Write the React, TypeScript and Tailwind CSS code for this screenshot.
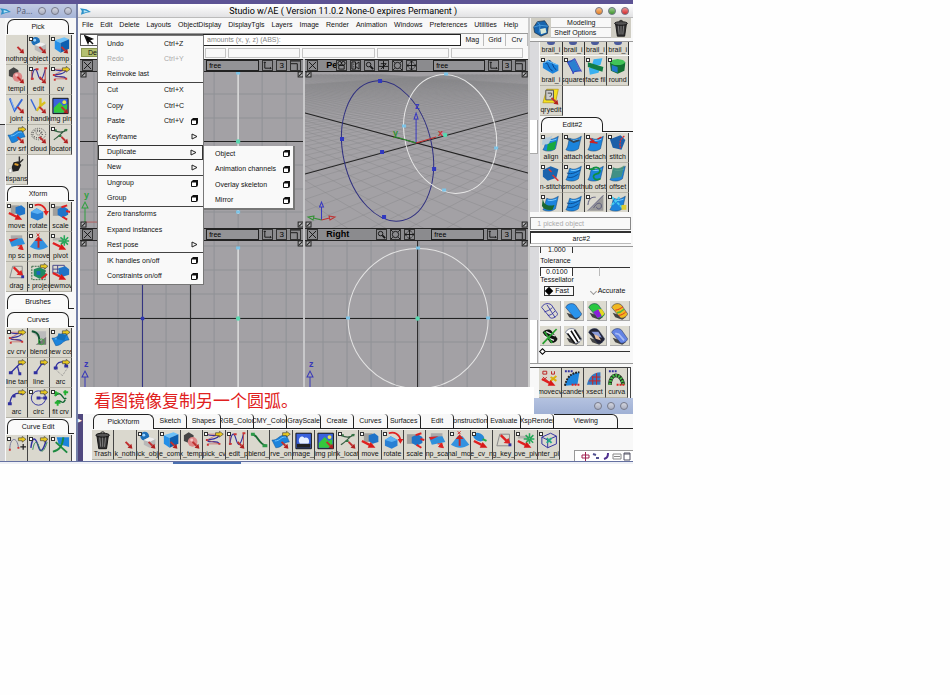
import type { ReactNode } from "react";
import clsx from "clsx";

type Tool = { icon: string; label: string; option?: boolean };

const BLUE = "#1c84dc";
const NAVY = "#3030a0";

const redArrow = (
  <g>
    <path d="M12 12l4 4" stroke="#c03030" strokeWidth="2" />
    <path d="M19 19l-5-1 4-4z" fill="#b02020" stroke="none" />
  </g>
);

const bigRedArrow = (
  <g>
    <path d="M3 11l8 4" stroke="#e02020" strokeWidth="2.5" />
    <path d="M17 18l-8 0 3-6z" fill="#d81818" stroke="none" />
  </g>
);

const yellowArrow = <path d="M13 2.500h4V1l4 3-4 3V5.500h-4z" fill="#e8c820" stroke="#333" strokeWidth=".6" />;

const greenStar = (
  <path
    d="M15 3v12M9 9h12M11 5l8 8M19 5l-8 8"
    stroke="#27a85a"
    strokeWidth="1.600"
    strokeDasharray="5 1"
  />
);

const cube = (
  <g>
    <path d="M5 5l10-3 5 2-9 4z" fill="#6cc0f8" />
    <path d="M5 5l6 3v10l-6-4z" fill="#2490e8" />
    <path d="M11 8l9-4v10l-9 4z" fill="#0d5fb0" />
  </g>
);

const patch = (
  <g>
    <path d="M2 10c6 1 7-6 15-5l3 7c-7 0-7 6-14 6z" fill={BLUE} stroke="#0c4f90" strokeWidth=".5" />
    <path d="M5 11c6 0 6-5 12-4" stroke="#70c4ff" fill="none" />
  </g>
);

const surface = (
  <g>
    <path d="M7 5c4 2 7 1 12-2l-3 13c-4 3-9 3-13 1 3-4 2-8 4-12z" fill={BLUE} stroke="#0c3c70" strokeWidth=".5" />
    <path d="M8 7c3 1 6 0 9-1" stroke="#80ccff" fill="none" />
  </g>
);

const dome = (fill: string) => (
  <g>
    <path d="M3 12l3 5 8 3 4-3z" fill="#444" />
    <path d="M2 6c1-4 7-6 11-3l7 10c0 3-5 6-8 5z" fill={fill} stroke="#1b2a55" strokeWidth=".6" />
  </g>
);

const trash = (
  <g>
    <path d="M5 5h12l-2 14H7z" fill="#333" stroke="#111" />
    <path d="M8 7l1 10M11 7v10M14 7l-1 10" stroke="#999" strokeWidth=".8" />
    <ellipse cx="11" cy="5" rx="7" ry="2" fill="#555" stroke="#111" />
    <path d="M9 3c0-2 4-2 4 0" fill="none" stroke="#222" />
  </g>
);

const icons: Record<string, ReactNode> = {
  nothing: redArrow,
  trash,
  object: (
    <g>
      <circle cx="8" cy="6" r="4.500" fill="#1d6fb8" />
      <circle cx="7" cy="5" r="1.500" fill="#9cd4ff" />
      <path d="M7 10l6-3 6 2v6l-6 3-6-3z" fill="#b8b8b8" />
      <path d="M7 10l6-3 6 2-6 3z" fill="#eee" />
      {redArrow}
    </g>
  ),
  comp: <g>{cube}{redArrow}</g>,
  templ: (
    <g>
      <path d="M3 5l5-3 5 3v6l-5 2-5-2z" fill="#444" />
      <circle cx="12" cy="12" r="5" fill="#d88" />
      <circle cx="11" cy="10" r="1.500" fill="#f4c4c4" />
      {redArrow}
    </g>
  ),
  edit: (
    <g fill="none">
      <path d="M4 15C5 3 8 1 10 8s4 12 8-4" stroke={NAVY} strokeWidth="1.200" />
      <path d="M4 15V5M18 4v11" stroke="#b44" />
      <path d="M3 14h3M8 4h3M17 3h3" stroke="#c33" strokeWidth="2" />
      {redArrow}
    </g>
  ),
  cv: (
    <g fill="none">
      <path d="M4 4c8 4 14-2 12 2S3 9 5 11s10-1 12 3" stroke={NAVY} strokeWidth="1.200" />
      <path d="M4 4h12L4 10l13 4H5" stroke="#b44" strokeWidth=".6" />
      <path d="M3 4h2M15 5h2M3 10h2M4 15h2M16 14h2" stroke="#c33" strokeWidth="2" />
      {yellowArrow}
    </g>
  ),
  joint: (
    <g fill="none">
      <path d="M4 3l5 13L17 4" stroke="#3868d8" strokeWidth="2" />
      <path d="M5 4l4 11" stroke="#9cf" strokeWidth=".8" />
      {redArrow}
    </g>
  ),
  handle: (
    <g fill="none">
      <path d="M3 4l6 12" stroke="#3868d8" strokeWidth="1.500" />
      <path d="M9 16l4-5V3M13 11l5-4" stroke="#d8c020" strokeWidth="2.500" />
      {redArrow}
    </g>
  ),
  image: (
    <g>
      <path d="M3 3h16v16H3z" fill="#3b62dd" stroke="#111" />
      <path d="M4 13l6-6 4 4 4-2v9H4z" fill="#35c83c" />
      <circle cx="15" cy="7" r="2" fill="#e8e850" />
      {redArrow}
    </g>
  ),
  photo: (
    <g>
      <path d="M3 3h16v16H3z" fill="#3b62dd" stroke="#111" />
      <path d="M6 11c0-5 4-6 6-3 3-2 6 2 4 6H7z" fill="#e8f0ff" />
      <path d="M4 14h14v4H4z" fill="#222" />
    </g>
  ),
  crvsrf: <g>{patch}{yellowArrow}{redArrow}</g>,
  cloud: (
    <g fill="none" stroke="#555">
      <ellipse cx="11" cy="9" rx="7.500" ry="6" strokeDasharray="1 1" />
      <ellipse cx="10" cy="9" rx="5" ry="4" strokeDasharray="1 1.500" strokeWidth="1.500" />
      <ellipse cx="11" cy="8" rx="2.500" ry="2" strokeDasharray="1 1" />
      {redArrow}
    </g>
  ),
  locator: (
    <g fill="none">
      <path d="M4 5c6 3 10 3 14-1M17 4c-4 3-8 8-13 11" stroke="#365c42" strokeWidth="1.200" />
      <path d="M4 5h3M9 11h3M15 5h3" stroke="#374" strokeWidth="2" />
      {redArrow}
    </g>
  ),
  blendc: <g fill="none"><path d="M4 4c7 1 6 10 15 12" stroke="#1c6a34" strokeWidth="2" /><path d="M3 4h4M15 16h5" stroke="#2c9a48" strokeWidth="3" /></g>,
  plug: (
    <g>
      <path d="M14 1v7M18 4l-5 5" stroke="#333" strokeWidth="1.500" />
      <path d="M8 7l5-1 3 4-3 6-6 1-1-5z" fill="#222" />
      <path d="M9 9l4 1" stroke="#e0a030" strokeWidth="2" />
      <path d="M3 14h3v4H3z" fill="#fff" stroke="#999" strokeWidth=".5" />
    </g>
  ),
  move: (
    <g>
      <path d="M5 3h9v9H5z" fill="#888" opacity=".7" />
      <path d="M10 5l6-2 4 3v6l-6 2-4-3z" fill="#2074c8" />
      {bigRedArrow}
    </g>
  ),
  rotate: (
    <g>
      <path d="M3 10l6-4 7 4v6l-6 3-7-3z" fill="#2880d4" />
      <path d="M3 10l6-4 7 4-6 2z" fill="#5ab0f4" />
      <path d="M7 3c6-2 11 1 12 7" fill="none" stroke="#e02020" strokeWidth="1.800" />
      <path d="M16 9h6l-3 5z" fill="#e02020" />
    </g>
  ),
  scale: (
    <g>
      <path d="M3 4h9v10H3z" fill="#888" opacity=".7" />
      <path d="M8 7l6-3 5 3v6l-6 3-5-3z" fill="#2074c8" />
      <path d="M12 5l6-2M13 15l5 3M17 9l4 1" stroke="#e02020" strokeWidth="2" />
    </g>
  ),
  npscale: (
    <g>
      <path d="M5 3h12v5H5z" fill="#aaa" />
      <path d="M3 7l14-1 3 6-14 3z" fill="#2e90dc" />
      <path d="M3 7l10-1-8 4z" fill="#d22" />
      <path d="M12 14h5M18 18l-5-1 3-4z" stroke="#d22" fill="#d22" />
    </g>
  ),
  propmove: (
    <g>
      <path d="M2 15l7-9h5l7 9c-7 4-12 4-19 0z" fill="#3492e0" />
      <path d="M11 16V8" stroke="#c22" strokeWidth="2" />
      <path d="M7 9l4-5 4 5z" fill="#c22" />
      <path d="M9 1l3 3M12 1L9 4" stroke="#c22" />
    </g>
  ),
  pivot: (
    <g>
      <path d="M3 7h10v5" stroke="#999" strokeWidth="3" fill="none" opacity=".6" />
      {greenStar}
      {bigRedArrow}
    </g>
  ),
  drag: (
    <g fill="none">
      <path d="M4 16L7 4h10v12z" stroke="#888" />
      <path d="M8 5l6 6" stroke="#d22" strokeWidth="2.500" />
      <path d="M18 14l-7-1 5-5z" fill="#d22" />
      <path d="M16 15h3" stroke={NAVY} strokeWidth="3" />
    </g>
  ),
  project: (
    <g>
      <path d="M4 4h14v14H4z" fill="none" stroke="#364" strokeDasharray="2 1" />
      <path d="M6 7l6-2 6 3v7l-6 2-6-3z" fill="#1f8c62" />
      <path d="M9 9h4v4H9z" fill="#1d66c0" />
      {yellowArrow}
      <path d="M14 17l6-5" stroke="#d22" strokeWidth="2" />
    </g>
  ),
  viewmove: (
    <g>
      <path d="M3 3h12v8H3zM3 7h12M8 3v8" fill="none" stroke="#448" />
      <path d="M9 6l7-2 4 3v6l-7 2-4-3z" fill="#2074c8" />
      {bigRedArrow}
    </g>
  ),
  blend: (
    <g fill="none">
      <path d="M3 3h16v14z" fill="#bbb" />
      <path d="M3 17h16V9L8 17z" fill="#777" />
      <path d="M4 3c7 1 8 5 8 13" stroke="#153" strokeWidth="2" />
      <circle cx="14" cy="14" r="3" stroke="#4a4" />
    </g>
  ),
  newcos: <g>{patch}<path d="M9 5l8 2-2 6-8-2z" fill="#1670b8" />{yellowArrow}</g>,
  linetan: (
    <g fill="none" stroke={NAVY}>
      <path d="M5 15L16 4M12 8l2 8" strokeWidth="1.300" />
      <path d="M3 15h4M14 5h3M13 16h3" strokeWidth="3" />
      {yellowArrow}
    </g>
  ),
  line: (
    <g fill="none" stroke={NAVY}>
      <path d="M8 15l7-10" strokeWidth="1.300" />
      <path d="M6 15h4M13 5h4" strokeWidth="3" />
      {yellowArrow}
    </g>
  ),
  arc: (
    <g fill="none" stroke={NAVY}>
      <path d="M4 16C5 8 8 4 17 5" strokeWidth="1.300" />
      <path d="M2 16h4M7 8h3M15 5h4" strokeWidth="3" />
      {yellowArrow}
    </g>
  ),
  arcTan: (
    <g fill="none" stroke={NAVY}>
      <path d="M6 10C7 2 15 2 17 8" strokeWidth="1.300" />
      <path d="M4 10l9 8 6-9" stroke="#888" strokeDasharray="1 1" />
      <path d="M4 10h4M15 8h4" strokeWidth="3" />
      {yellowArrow}
    </g>
  ),
  circ: (
    <g fill="none" stroke={NAVY}>
      <circle cx="11" cy="10" r="7.500" />
      <path d="M11 10h7" />
      <path d="M9 10h4M16 10h4" strokeWidth="3" />
      {yellowArrow}
    </g>
  ),
  fit: (
    <g fill="none">
      <path d="M5 8c8-8 8 6 12 2M6 15c6-6 6 4 10-3" stroke="#163" strokeWidth="1.500" />
      <path d="M4 5h5M6 3v5M5 15h6M8 12v6M14 4h5M16 2v5" stroke="#22b030" strokeWidth="2" />
    </g>
  ),
  curveAdd: (
    <g fill="none">
      <path d="M4 15c0-14 8-14 9-2" stroke="#779" />
      <path d="M15 12h6M18 9v6" stroke="#222" strokeWidth="1.300" />
      <path d="M3 15h2M12 13h2" stroke="#c33" strokeWidth="2" />
      {yellowArrow}
    </g>
  ),
  curveWave: (
    <g fill="none">
      <path d="M3 13c2-16 6-8 8-1s5 4 8-7" stroke={NAVY} strokeWidth="1.500" />
      <path d="M5 15c2-12 5-8 7-2s5 4 8-6" stroke="#385" />
      {yellowArrow}
    </g>
  ),
  curveSurf: (
    <g>
      <path d="M7 2h13v10L9 9z" fill={BLUE} />
      <path d="M3 17c6-1 10-5 11-15M6 7l12 11" stroke="#1c8a40" strokeWidth="2" fill="none" />
    </g>
  ),
  wireBox: (
    <g fill="none" stroke={NAVY}>
      <path d="M4 7l9-4 6 3v8l-9 4-6-4zM4 7l6 3 9-4M10 10v8" />
      <path d="M9 8l5 5M14 8l-5 5" stroke="#2a8" strokeWidth="2" />
    </g>
  ),
  pickpoint: (
    <g>
      <ellipse cx="8" cy="7" rx="6" ry="4" fill="#2688d8" transform="rotate(25 8 7)" />
      <path d="M12 9l4 2" stroke="#2a4" strokeWidth="2" />
      {bigRedArrow}
    </g>
  ),
  rail: (
    <g>
      <path d="M3 7l5-3 11 5v6l-6 3L3 12z" fill={BLUE} />
      <path d="M5 7c4-2 3 6 8 8M9 4c5 1 3 7 8 10" stroke="#083c86" fill="none" />
      <path d="M4 7l4-2 10 4" stroke="#6cc4ff" fill="none" />
    </g>
  ),
  square: (
    <g>
      <path d="M4 5l8-2 6 12-8 2z" fill="#2a80d0" />
      <path d="M3 5c5 3 7-3 9-2M10 18c2-5 8-1 9-4M3 3l8 15M12 2l7 14" stroke="#3838b8" fill="none" />
    </g>
  ),
  filSurf: (
    <g>
      <path d="M9 3l9-1-2 7-9 1zM4 12l12-1-2 6-9 2z" fill="#38b0f0" />
      <path d="M3 6l16 5-1 5L3 11z" fill="#127c44" />
    </g>
  ),
  round: (
    <g>
      <path d="M3 6l8-3 8 3-1 9-7 3-7-3z" fill="#136f33" />
      <ellipse cx="11" cy="6" rx="7.500" ry="3" fill="#42c458" />
      <path d="M5 9l6 2v6l-6-2z" fill="#2277cc" />
    </g>
  ),
  query: (
    <g>
      <path d="M7 3h12l-3 14H3z" fill="#f4e020" stroke="#a80" strokeWidth=".6" />
      <path d="M6 4h8v10H6z" fill="#ccc" stroke="#555" />
      <path d="M8 7h4v2l-2 2" stroke="#444" fill="none" />
      {redArrow}
    </g>
  ),
  align: (
    <g>
      {surface}
      <path d="M3 4c4 1 7 0 10-2l-4 9-7 1z" fill="#b4ccdc" />
      <path d="M8 11l9-3-2 9-8 1z" fill="#18a840" />
    </g>
  ),
  attach: <g>{surface}<path d="M2 4l9 5 6-2" stroke="#345" strokeWidth="2" fill="none" /></g>,
  detach: <g>{surface}<path d="M3 4l6 4-4 1 8 1M13 6l4-2" stroke="#c22" strokeWidth="1.500" fill="none" /></g>,
  stitch: (
    <g>
      <path d="M3 6l11-4 5 5-4 10-9-2z" fill="#1c5fa8" />
      <path d="M18 3c-5 3-5 8-4 13" stroke="#d33" strokeDasharray="2 1" strokeWidth="1.500" fill="none" />
    </g>
  ),
  unstitch: (
    <g>
      <path d="M3 7l8-4 8 3-2 9-9 3-5-4z" fill="#1c64ac" />
      <path d="M13 12l6 6M9 6l3 3" stroke="#d33" strokeWidth="1.500" />
    </g>
  ),
  smooth: <g>{surface}<path d="M4 10c5 2 10-1 14-3M4 14c5 2 9-1 12-3" stroke="#0a4a90" fill="none" /></g>,
  subofst: <g>{surface}<path d="M8 5c8-3 10 5 4 6s-3 8 4 5M4 6h6" stroke="#109040" strokeWidth="1.800" fill="none" /></g>,
  offset: <g>{surface}<path d="M6 4c4 2 8 1 12-2l-3 12-11 2z" fill="#4a9470" opacity=".8" /></g>,
  flange: <g>{surface}<path d="M3 4c0 7 4 10 12 8l-2 5c-6 1-9-1-11-4z" fill="#186830" /></g>,
  curves2: (
    <g>
      <path d="M19 2v16H4z" fill="#999" />
      <path d="M3 12C4 4 8 4 11 4M9 15c3-6 8-6 8-2s-5 4-5 1M3 18L19 2" stroke="#557" fill="none" />
    </g>
  ),
  texture: (
    <g>
      {surface}
      <path d="M5 4l12 12M13 4l-9 9" stroke="#4ce" strokeWidth="2" strokeDasharray="3 1" />
      <path d="M15 12h5v5h-5z" fill="#dc3" />
    </g>
  ),
  movecv: (
    <g>
      <path d="M4 3h4v3H4zM13 3v3h3V3M4 9l5 4M8 9l-4 4" fill="none" stroke="#b22" />
      <path d="M12 9l6 4M18 8l-6 5" stroke="#d8b010" strokeWidth="2" />
      {bigRedArrow}
    </g>
  ),
  scandev: (
    <g>
      <path d="M3 18C5 9 9 5 18 4l-2 13z" fill={BLUE} />
      <path d="M3 18C5 9 9 5 18 4" stroke="#222" strokeWidth="2" fill="none" strokeDasharray="2 1" />
      <path d="M3 3h9" stroke={NAVY} strokeWidth="2" strokeDasharray="2 1" />
      <path d="M10 17h9" stroke="#d22" strokeWidth="2" strokeDasharray="2 1" />
    </g>
  ),
  xsect: (
    <g>
      <path d="M3 17C5 9 9 4 17 4v13z" fill="#3578c0" />
      <path d="M5 13h12M8 9h9M9 8v9M13 5v12" stroke="#c22" />
    </g>
  ),
  curva: (
    <g fill="none">
      <path d="M4 17C5 4 15 4 18 17" stroke="#222" strokeWidth="4" />
      <path d="M4 17C5 4 15 4 18 17" stroke="#4b4" strokeWidth="3" strokeDasharray="2 1" />
      <path d="M3 3h9" stroke={NAVY} strokeWidth="2" strokeDasharray="2 1" />
      <path d="M11 17h9" stroke="#d22" strokeWidth="2" strokeDasharray="2 1" />
    </g>
  ),
  domeWire: (
    <g fill="none" stroke={NAVY}>
      <path d="M2 6c1-4 7-6 11-3l7 10c0 3-5 6-8 5zM8 3l9 14M5 11c3-1 7-2 9-5M9 15c3 0 6-2 8-5" />
    </g>
  ),
  domeBlue: dome("#2a94ec"),
  domeMulti: (
    <g>
      {dome("#28c840")}
      <path d="M7 11l6-3 4 8-5 2z" fill="#8a20d8" />
      <path d="M13 8l4 0 3 5-3 3z" fill="#e8d820" />
    </g>
  ),
  domeGold: (
    <g>
      {dome("#f0b820")}
      <path d="M6 9c3 0 6-2 9-4M10 15c3 0 6-2 8-4" stroke="#d22" fill="none" />
      <path d="M8 12c3 0 6-2 8-4" stroke="#4b4" strokeWidth="1.500" fill="none" />
    </g>
  ),
  domeNone: (
    <g>
      <path d="M3 6c3-4 8-4 10-2l7 9c-1 4-5 5-8 5z" fill="#111" />
      <path d="M4 10l12 5M7 5l10 5" stroke="#eee" strokeWidth="1.500" />
      <path d="M3 19L19 2M5 5l9 13" stroke="#28a030" strokeWidth="2" />
    </g>
  ),
  domeZebra: (
    <g>
      {dome("#fff")}
      <path d="M4 7l8 11M8 4l8 13M12 3l7 11" stroke="#111" strokeWidth="1.800" />
    </g>
  ),
  domeEnv: <g>{dome("#223")}<path d="M5 5l8 0 4 7-7-2z" fill="#8898d8" /><path d="M8 8l5 2 3 5-6-2z" fill="#e8c0a0" /></g>,
  domeSoft: <g>{dome("#6484e4")}<path d="M6 7l4 1 6 7" stroke="#a8bcf4" fill="none" strokeWidth="2" /></g>,
  gem: (
    <g>
      <path d="M3 9l4-6 8-1 4 6-1 8-7 3-7-4z" fill="#1764ae" stroke="#123" strokeWidth=".7" />
      <path d="M3 9l7-2 9 1M10 7L7 3M10 7l-1 8" stroke="#4a9cdc" fill="none" />
      <path d="M10 11l6-1 1 5-6 2z" fill="#d8e8d8" />
    </g>
  ),
};

const pickTools: Tool[] = [
  { icon: "nothing", label: "nothng" },
  { icon: "object", label: "object", option: true },
  { icon: "comp", label: "comp", option: true },
  { icon: "templ", label: "templ" },
  { icon: "edit", label: "edit", option: true },
  { icon: "cv", label: "cv", option: true },
  { icon: "joint", label: "joint" },
  { icon: "handle", label: "k handle" },
  { icon: "image", label: "img pln" },
  { icon: "crvsrf", label: "crv srf" },
  { icon: "cloud", label: "cloud" },
  { icon: "locator", label: "locator", option: true },
  { icon: "plug", label: "tispans" },
];

const xformTools: Tool[] = [
  { icon: "move", label: "move", option: true },
  { icon: "rotate", label: "rotate", option: true },
  { icon: "scale", label: "scale", option: true },
  { icon: "npscale", label: "np sc" },
  { icon: "propmove", label: "p move", option: true },
  { icon: "pivot", label: "pivot", option: true },
  { icon: "drag", label: "drag" },
  { icon: "project", label: "e projec" },
  { icon: "viewmove", label: "iewmov" },
];

const curveTools: Tool[] = [
  { icon: "cv", label: "cv crv", option: true },
  { icon: "blend", label: "blend" },
  { icon: "newcos", label: "new cos", option: true },
  { icon: "linetan", label: "line tan" },
  { icon: "line", label: "line" },
  { icon: "arcTan", label: "arc" },
  { icon: "arc", label: "arc" },
  { icon: "circ", label: "circ", option: true },
  { icon: "fit", label: "fit crv", option: true },
];

const curveEditTools: Tool[] = [
  { icon: "curveAdd", label: "", option: true },
  { icon: "curveWave", label: "", option: true },
  { icon: "curveSurf", label: "", option: true },
];

const surfaceTools: Tool[] = [
  { icon: "rail", label: "brail_i", option: true },
  { icon: "square", label: "squarer", option: true },
  { icon: "filSurf", label: "face fil", option: true },
  { icon: "round", label: "round", option: true },
  { icon: "query", label: "qryedit" },
];

const editTools: Tool[] = [
  { icon: "align", label: "align", option: true },
  { icon: "attach", label: "attach", option: true },
  { icon: "detach", label: "detach", option: true },
  { icon: "stitch", label: "stitch", option: true },
  { icon: "unstitch", label: "n-stitch", option: true },
  { icon: "smooth", label: "smooth", option: true },
  { icon: "subofst", label: "ub ofst", option: true },
  { icon: "offset", label: "offset", option: true },
  { icon: "flange", label: "", option: true },
  { icon: "smooth", label: "" },
  { icon: "curves2", label: "", option: true },
  { icon: "texture", label: "", option: true },
];

const evalTools: Tool[] = [
  { icon: "movecv", label: "movecv" },
  { icon: "scandev", label: "scandev" },
  { icon: "xsect", label: "xsect" },
  { icon: "curva", label: "curva" },
];

const shelfTools: Tool[] = [
  { icon: "trash", label: "Trash" },
  { icon: "nothing", label: "k_noth" },
  { icon: "object", label: "ick_obj", option: true },
  { icon: "comp", label: "e_com", option: true },
  { icon: "templ", label: "x_templ" },
  { icon: "cv", label: "pick_cv", option: true },
  { icon: "edit", label: "_edit_p", option: true },
  { icon: "blendc", label: "blend_" },
  { icon: "crvsrf", label: "rve_on" },
  { icon: "photo", label: "image_j" },
  { icon: "image", label: "img pln" },
  { icon: "locator", label: "k_locat", option: true },
  { icon: "move", label: "move", option: true },
  { icon: "rotate", label: "rotate", option: true },
  { icon: "scale", label: "scale" },
  { icon: "npscale", label: "np_sca" },
  { icon: "propmove", label: "nal_mo", option: true },
  { icon: "pickpoint", label: "e_cv_n", option: true },
  { icon: "drag", label: "g_key_" },
  { icon: "pivot", label: "ove_piv", option: true },
  { icon: "wireBox", label: "nter_pi", option: true },
];

const menus = [
  "File", "Edit", "Delete", "Layouts", "ObjectDisplay", "DisplayTgls", "Layers",
  "Image", "Render", "Animation", "Windows", "Preferences", "Utilities", "Help",
];

const shelfTabs = [
  "Sketch", "Shapes", "RGB_Colou", "CMY_Colou", "GrayScale", "Create", "Curves",
  "Surfaces", "Edit", "onstruction", "Evaluate", "XspRender",
];

type MenuItem = { label: string; keys?: string; end?: "box" | "sub"; line?: boolean; disabled?: boolean; open?: boolean };

const editMenu: MenuItem[] = [
  { label: "Undo", keys: "Ctrl+Z" },
  { label: "Redo", keys: "Ctrl+Y", disabled: true },
  { label: "Reinvoke last", line: true },
  { label: "Cut", keys: "Ctrl+X" },
  { label: "Copy", keys: "Ctrl+C" },
  { label: "Paste", keys: "Ctrl+V", end: "box" },
  { label: "Keyframe", end: "sub" },
  { label: "Duplicate", end: "sub", open: true },
  { label: "New", end: "sub", line: true },
  { label: "Ungroup", end: "box" },
  { label: "Group", end: "box", line: true },
  { label: "Zero transforms" },
  { label: "Expand instances" },
  { label: "Rest pose", end: "sub", line: true },
  { label: "IK handles on/off", end: "box" },
  { label: "Constraints on/off", end: "box" },
];

function ToolIcon({ name }: { name: string }) {
  return (
    <svg viewBox="0 0 22 20" className="h-[20px] w-full" aria-hidden="true">
      {icons[name]}
    </svg>
  );
}

function ToolButton({ tool }: { tool: Tool }) {
  return (
    <button
      type="button"
      className="relative flex h-[30px] min-w-0 flex-col items-center overflow-hidden border-r border-b border-r-[#444] border-b-[#b5b3a8] bg-[#dad8ce]"
    >
      {tool.option && <span className="absolute top-[2px] left-[1px] size-[4px] border border-[#333] bg-white" />}
      <ToolIcon name={tool.icon} />
      <span className="flex h-[9px] w-full justify-center text-[7px] leading-[8px] whitespace-nowrap">{tool.label}</span>
    </button>
  );
}

function FolderTab({ title }: { title: string }) {
  return (
    <div className="flex h-[15px] items-end">
      <span className="w-px" />
      <button type="button" className="h-[15px] w-[62px] rounded-t-[7px] border-x border-t border-[#222] bg-[#fafafa] text-[7px]">
        {title}
      </button>
      <span className="flex-1 border-b border-[#222]" />
    </div>
  );
}

function WindowDots({ colors }: { colors: "gray" | "traffic" }) {
  const fills = colors === "gray" ? ["bg-[#a9aec0]", "bg-[#a9aec0]", "bg-[#a9aec0]"] : ["bg-[#e88020]", "bg-[#3f9828]", "bg-[#d82828]"];
  return (
    <div className="flex gap-[5px]">
      {fills.map((fill, i) => (
        <button
          key={i}
          type="button"
          aria-label={["Minimize", "Maximize", "Close"][i]}
          className={clsx("size-[8px] rounded-full border border-[#777b8c] bg-linear-to-b from-white/50 to-transparent", fill)}
        />
      ))}
    </div>
  );
}

function AppLogo() {
  return (
    <svg viewBox="0 0 12 8" className="h-[8px] w-[11px]" aria-hidden="true">
      <path d="M0 1l7 1 5 3-5 1-6 2 1-4z" fill="#2c90c8" />
      <path d="M4 3l5 1.500L4 6z" fill="#b5e4f8" />
    </svg>
  );
}

function Palette() {
  return (
    <aside className="flex h-[457px] w-[76px] shrink-0 flex-col overflow-hidden bg-[#f8f8f8]">
      <div className="flex h-[14px] shrink-0 items-center justify-between bg-linear-to-b from-[#c2cbe2] to-[#a6b5d8] pr-[4px] text-[8px] text-[#555d75]">
        <AppLogo />
        <span className="font-['Noto_Sans']">Pa...</span>
        <WindowDots colors="gray" />
      </div>
      <div className="flex min-h-0 flex-1">
        <div className="w-[5px] shrink-0 bg-[#d4d4d6]">
          <div className="h-[107px] border-b border-[#333] bg-[#f2f2f2]" />
        </div>
        <div className="min-w-0 flex-1 pt-px pr-[2px] pl-px">
          <FolderTab title="Pick" />
          <div className="mt-px grid w-[66px] grid-cols-3">{pickTools.map((t) => <ToolButton key={t.label} tool={t} />)}</div>
          <div className="mt-px"><FolderTab title="Xform" /></div>
          <div className="mt-px grid w-[66px] grid-cols-3">{xformTools.map((t) => <ToolButton key={t.label} tool={t} />)}</div>
          <div className="mt-[2px]"><FolderTab title="Brushes" /></div>
          <div className="mt-[3px]"><FolderTab title="Curves" /></div>
          <div className="mt-px grid w-[66px] grid-cols-3">{curveTools.map((t, i) => <ToolButton key={i} tool={t} />)}</div>
          <div className="mt-px"><FolderTab title="Curve Edit" /></div>
          <div className="mt-px grid w-[66px] grid-cols-3">{curveEditTools.map((t) => <ToolButton key={t.icon} tool={t} />)}</div>
        </div>
      </div>
    </aside>
  );
}

const glyphs: Record<string, ReactNode> = {
  close: <path d="M1 1l8 8M9 1L1 9" />,
  axes: <path d="M2 1v7h7M1 2l1-1 1 1M8 7l1 1-1 1" />,
  corner: <path d="M0 3h7v7M0 0h10" />,
  camera: <g><circle cx="3" cy="2.500" r="2" /><circle cx="7" cy="2.500" r="2" /><path d="M2 5h6v4H2z" /></g>,
  film: <path d="M1 1v8h4V1zM5 4l4-3v8L5 6M3 3v1M3 6v1" />,
  zoom: <g><circle cx="4" cy="4" r="2.500" /><path d="M6 6l3 3" strokeWidth="2" /></g>,
  tumble: <path d="M5 0v9M0 6h10M2 3h6M2 9l6-6" />,
  look: <g><circle cx="5" cy="5" r="3.500" /><path d="M0 0l2 2M10 0L8 2M0 10l2-2M10 10L8 8" /></g>,
  pan: <path d="M5 0v10M0 5h10M3 2l2-2 2 2M3 8l2 2 2-2M2 3L0 5l2 2M8 3l2 2-2 2" />,
};

function Glyph({ name }: { name: string }) {
  return (
    <button type="button" aria-label={name} className="size-[11px] shrink-0 border border-[#333]">
      <svg viewBox="0 0 10 10" className="size-full" fill="none" stroke="#111" aria-hidden="true">
        {glyphs[name]}
      </svg>
    </button>
  );
}

function ViewHeader({ title, tools }: { title?: string; tools: string[] }) {
  return (
    <div className="flex h-[13px] items-center border-y border-[#222] bg-[#8b8b8e] px-[2px]">
      <Glyph name="close" />
      <strong className="ml-[8px] w-[10px] text-[9px] leading-[11px] whitespace-nowrap">{title}</strong>
      <span className="flex flex-1 justify-end gap-[3px]">{tools.map((t) => <Glyph key={t} name={t} />)}</span>
      <select aria-label="Constraint" className="mr-[3px] ml-[16px] h-[11px] w-[53px] appearance-none border border-[#222] bg-[#939396] px-[2px] text-[7px] leading-[8px]">
        <option>free</option>
      </select>
      <Glyph name="axes" />
      <button type="button" className="mx-[3px] h-[11px] w-[11px] border border-[#333] text-[8px] leading-[9px]">3</button>
      <Glyph name="corner" />
    </div>
  );
}

function Handle({ x, y }: { x: number; y: number }) {
  return (
    <g stroke="#222" fill="#b4b4b6">
      <rect x={x} y={y} width="5" height="5" />
      <path d={`M${x + 1} ${y + 4}l3-3`} />
    </g>
  );
}

const gridX = Array.from({ length: 20 }, (_, i) => 95 + i * 24);
const gridY = Array.from({ length: 14 }, (_, i) => 47 + i * 24);

// ground plane seen at 45 degrees, one segment per grid line
const floor = Array.from({ length: 101 }, (_, i) => (i - 50) * 0.6)
  .map((c) =>
    [1, -1]
      .map((side) => {
        const at = (z: number) => `${(416 + (322 * side * (c - (z - 10))) / z).toFixed(1)} ${(55 + 880 / z).toFixed(1)}`;
        return `M${at(3)}L${at(45)}`;
      })
      .join(""),
  )
  .join("");

function Gizmo({ x, y, label }: { x: number; y: number; label: string }) {
  const color = label === "y" ? "#30a040" : "#3838b8";
  return (
    <g>
      <text x={x - 1} y={y - 24} fontSize="9" fontWeight="bold" fill={color}>{label}</text>
      <path d={`M${x} ${y}v-14M${x - 3} ${y - 14}l3-6 3 6z`} stroke={color} fill="none" />
    </g>
  );
}

function TopView() {
  return (
    <svg viewBox="80 72 223 156" preserveAspectRatio="xMidYMid slice" className="h-[156px] w-full bg-[#a3a1a5]">
      <path d={gridX.map((x) => `M${x - 1} 72v160`).join("")} stroke="#8f9196" />
      <path d={[94, 118, 165, 189, 212].map((y) => `M80 ${y}h224`).join("")} stroke="#8f9196" />
      <path d="M80 141.500h224" stroke="#222" />
      <path d="M238 72v142" stroke="#e0e0e0" strokeWidth="1.500" />
      <path d="M236 73h4M236 212h4" stroke="#7cc4e8" strokeWidth="3" />
      <circle cx="238" cy="141.500" r="2.200" fill="#58d8b0" />
      <path d="M85 222h20" stroke="#b06060" />
      <Gizmo x={85} y={222} label="y" />
      <Handle x={81} y={72} />
      <Handle x={81} y={222} />
      <Handle x={298} y={72} />
      <Handle x={298} y={222} />
    </svg>
  );
}

function PerspView() {
  return (
    <svg viewBox="305 72 223 156" preserveAspectRatio="xMidYMid slice" className="h-[156px] w-full bg-[#a3a1a5]">
      <path d={floor} stroke="#858589" strokeWidth=".4" fill="none" />
      <path d="M305 113l223 60M305 174l223-61" stroke="#222" fill="none" />
      <ellipse cx="387.500" cy="151" rx="44.500" ry="71" transform="rotate(-12.200 387.500 151)" fill="none" stroke="#303080" />
      <ellipse cx="450" cy="134" rx="45.500" ry="60" transform="rotate(-14 450 134)" fill="none" stroke="#e8e8e8" />
      <path d="M378 81h4M340 139h4M432 169h4M382 217h4M380 152h4" stroke="#3038c0" strokeWidth="4" />
      <path d="M444 74h4M402 126h4M494 148h4M442 190h4" stroke="#7cc4e8" strokeWidth="3" />
      <path d="M416 143v-24M414 119l2-6 2 6z" stroke="#3838c0" fill="none" />
      <path d="M416 143l20-6" stroke="#c03030" />
      <path d="M416 143l-20-6" stroke="#309030" />
      <circle cx="445" cy="135" r="2.200" fill="#58d8b0" />
      <g fontSize="9" fontWeight="bold">
        <text x="415" y="109" fill="#3838c0">z</text>
        <text x="438" y="136" fill="#d03030">x</text>
        <text x="393" y="136" fill="#309030">y</text>
      </g>
      <path d="M321.500 220v-13M319.500 207l2-5 2 5z" stroke="#3838c0" fill="none" />
      <path d="M321.500 220l8-2M329 216l6 1-5 3z" stroke="#c03030" fill="none" />
      <path d="M321.500 220l-8-2M314 216l-6 1 5 3z" stroke="#309030" fill="none" />
      <Handle x={306} y={72} />
      <Handle x={306} y={222} />
      <Handle x={522} y={72} />
      <Handle x={522} y={222} />
    </svg>
  );
}

function FrontView() {
  return (
    <svg viewBox="80 241 223 146" preserveAspectRatio="xMidYMid slice" className="h-[146px] w-full bg-[#a3a1a5]">
      <path d={gridX.map((x) => `M${x - 1} 241v146`).join("")} stroke="#8f9196" />
      <path d={gridY.map((y) => `M80 ${y - 17}h224`).join("")} stroke="#8f9196" />
      <path d="M80 318.500h224M190.500 241v146" stroke="#222" />
      <path d="M142.500 241v146" stroke="#303080" />
      <path d="M238 248v140" stroke="#e0e0e0" strokeWidth="1.500" />
      <path d="M236 248h4" stroke="#7cc4e8" strokeWidth="3" />
      <circle cx="142.500" cy="318.500" r="2" fill="#3038b0" />
      <circle cx="238" cy="318.500" r="2.200" fill="#58d8b0" />
      <Gizmo x={85} y={391} label="z" />
      <Handle x={81} y={241} />
      <Handle x={298} y={241} />
    </svg>
  );
}

function RightView() {
  return (
    <svg viewBox="305 241 223 146" preserveAspectRatio="xMidYMid slice" className="h-[146px] w-full bg-[#a3a1a5]">
      <path d={gridX.map((x) => `M${x - 12} 241v146`).join("")} stroke="#8f9196" />
      <path d={gridY.map((y) => `M305 ${y - 17}h224`).join("")} stroke="#8f9196" />
      <path d="M305 318.500h224M417.500 241v146" stroke="#222" />
      <circle cx="418" cy="318.500" r="70" fill="none" stroke="#e4e4e4" />
      <path d="M416 248h4M346 318h4M486 318h4" stroke="#7cc4e8" strokeWidth="3" />
      <circle cx="417.500" cy="318.500" r="2.200" fill="#58d8b0" />
      <Gizmo x={310} y={391} label="z" />
      <Handle x={306} y={241} />
      <Handle x={522} y={241} />
    </svg>
  );
}

function MenuRow({ item }: { item: MenuItem }) {
  return (
    <button
      type="button"
      role="menuitem"
      disabled={item.disabled}
      className={clsx(
        "flex items-center pr-[5px] text-left text-[7px] whitespace-nowrap",
        item.disabled && "text-[#aaa]",
        item.line && "border-b border-b-[#444]",
        item.open ? "border border-[#333] pl-[8px]" : "pl-[9px]",
      )}
    >
      <span className="flex-1">{item.label}</span>
      {item.keys && <span className="w-[20px]">{item.keys}</span>}
      <span className="flex w-[14px] justify-end">
        {item.end === "box" && (
          <svg viewBox="0 0 7 7" className="size-[7px]" aria-label="Options">
            <path d="M2 0h5v5L6 7V2H0z" fill="#111" />
            <path d="M.5 2h5v4.500h-5z" fill="#fff" stroke="#111" />
          </svg>
        )}
        {item.end === "sub" && (
          <svg viewBox="0 0 7 7" className="size-[7px]" aria-hidden="true">
            <path d="M1 1l5 2.500L1 6z" fill="none" stroke="#222" />
          </svg>
        )}
      </span>
    </button>
  );
}

function ViewArea() {
  return (
    <section className="grid grid-cols-2 gap-x-[2px] bg-[#c8c8ca] text-black">
      <div>
        <ViewHeader tools={[]} />
        <TopView />
      </div>
      <div>
        <ViewHeader title="Pe" tools={["camera", "film", "zoom", "tumble", "look", "pan"]} />
        <PerspView />
      </div>
      <div>
        <ViewHeader tools={[]} />
        <FrontView />
      </div>
      <div>
        <ViewHeader title="Right" tools={["zoom", "look", "pan"]} />
        <RightView />
      </div>
    </section>
  );
}

function Workspace() {
  return (
    <div className="min-w-0 flex-1">
      <nav className="flex h-[16px] items-center gap-[7px] border-b border-[#999] pl-[2px] text-[7px]">
        {menus.map((m) => <button key={m} type="button">{m}</button>)}
      </nav>
      <div className="flex h-[12px] items-stretch text-[7px]">
        <button type="button" aria-label="Pick" className="w-[123px] border border-[#555] bg-white">
          <svg viewBox="0 0 12 10" className="ml-[3px] h-[10px] w-[12px]" aria-hidden="true">
            <path d="M1 1l7 3-3 1-1 3zM5 5l4 4" stroke="#111" strokeWidth="1.500" />
          </svg>
        </button>
        <input aria-label="Prompt" defaultValue="amounts (x, y, z) (ABS):" className="min-w-0 flex-1 border border-[#222] bg-white px-[3px] text-[#888]" />
        <button type="button" className="w-[23px] border-r border-[#bbb]">Mag</button>
        <button type="button" className="w-[22px] border-r border-[#bbb]">Grid</button>
        <button type="button" className="w-[22px] border-r border-[#bbb]">Crv</button>
      </div>
      <div className="flex h-[13px] items-center gap-[2px] pr-[5px] pl-px">
        <span className="h-[9px] w-[122px] border border-[#8a9850] bg-[#b3c070] pl-[6px] text-[7px] leading-[8px]">De</span>
        <span className="h-[10px] w-[21px] border border-[#c4c4c4]" />
        {[0, 1, 2, 3].map((n) => <span key={n} className="h-[10px] flex-1 border border-[#c4c4c4]" />)}
      </div>
      <ViewArea />
      <p className="relative z-10 -mr-[6px] h-[27px] bg-white pl-[14px] font-['Noto_Sans_CJK_SC',sans-serif] text-[17px] leading-[25px] text-[#e02020]">
        看图镜像复制另一个圆弧。
      </p>
    </div>
  );
}

function ScrollRail({ className }: { className: string }) {
  return (
    <div className="w-[9px] shrink-0 bg-[#dadadd]">
      <div className={clsx("w-[8px] border-r border-b border-[#aaa] bg-white", className)} />
    </div>
  );
}

function ControlPanel() {
  const domes = ["domeWire", "domeBlue", "domeMulti", "domeGold", "domeNone", "domeZebra", "domeEnv", "domeSoft"];
  return (
    <aside className="flex h-[396px] w-[105px] shrink-0 flex-col border-l-2 border-[#ccc] bg-[#f8f8f8] text-[7px]">
      <div className="flex h-[20px] shrink-0 items-stretch pl-px">
        <button type="button" aria-label="Mode" className="w-[20px] bg-[#cfcdc3]"><ToolIcon name="gem" /></button>
        <div className="flex flex-1 flex-col">
          <button type="button" className="h-[10px] border-b border-[#bbb] leading-[9px]">Modeling</button>
          <button type="button" className="h-[10px] border-b border-[#bbb] pl-[3px] text-left leading-[9px]">Shelf Options</button>
        </div>
        <button type="button" aria-label="Trash" className="mr-[2px] w-[20px] bg-[#cfcdc3]"><ToolIcon name="trash" /></button>
      </div>
      <div className="mt-[3px] flex h-[171px] shrink-0 overflow-hidden border-t border-[#999]">
        <ScrollRail className="mt-[78px] h-[34px]" />
        <div className="min-w-0 flex-1 pl-px">
          <div className="grid h-[13px] w-[89px] grid-cols-4 bg-[#dad8ce]">
            {[0, 1, 2, 3].map((n) => (
              <span key={n} className="flex flex-col items-center border-r border-[#333] leading-[9px]">
                <i className="h-[3px] w-[8px] rounded-b-full bg-[#4a5a9c]" />
                brail_i
              </span>
            ))}
          </div>
          <div className="mt-px grid w-[89px] grid-cols-4">{surfaceTools.map((t) => <ToolButton key={t.label} tool={t} />)}</div>
          <div className="mt-px"><FolderTab title="Edit#2" /></div>
          <div className="mt-px grid w-[89px] grid-cols-4">{editTools.map((t, i) => <ToolButton key={i} tool={t} />)}</div>
        </div>
      </div>
      <div className="mt-[5px] mr-[2px] h-[13px] shrink-0 border border-[#888] px-[6px] leading-[11px] text-[#aaa]">1 picked object</div>
      <input aria-label="Object name" defaultValue="arc#2" className="mt-px mr-[2px] h-[13px] min-w-0 shrink-0 border-t-2 border-b border-l border-[#333] border-b-[#bbb] bg-white text-center" />
      <div className="mt-[2px] flex h-[118px] shrink-0 overflow-hidden border-t border-b border-[#999]">
        <ScrollRail className="mt-[73px] h-[44px]" />
        <div className="min-w-0 flex-1 pr-[3px] pl-px">
          <div className="flex h-[6px] items-end">
            <output className="w-[33px] border-x border-[#333] text-center leading-[7px]">1.000</output>
          </div>
          <label htmlFor="tolerance" className="mt-[4px] block h-[8px] leading-[8px]">Tolerance</label>
          <div className="mt-[2px] flex h-[9px]">
            <input id="tolerance" defaultValue="0.0100" className="w-[33px] border-x border-t border-[#333] bg-white text-center leading-[8px]" />
            <span className="w-[27px] border-t border-r border-[#333] border-r-[#bbb]" />
            <span className="flex-1 border-t border-[#333]" />
          </div>
          <fieldset>
            <legend className="mt-[4px] h-[8px] leading-[8px]">Tessellator</legend>
            <div className="mt-[2px] flex h-[10px] items-center justify-between pr-[5px] pl-[4px]">
              <label className="flex h-[10px] w-[30px] items-center gap-[3px] border border-[#333] pl-px">
                <input type="radio" name="tess" defaultChecked className="size-[6px] rotate-45 appearance-none bg-black" />
                Fast
              </label>
              <label className="flex items-center gap-[2px]">
                <input type="radio" name="tess" className="size-[5px] rotate-45 appearance-none border-r border-b border-[#999]" />
                Accurate
              </label>
            </div>
          </fieldset>
          <div className="mt-[5px] grid grid-cols-4 gap-x-[3px] gap-y-[5px]">
            {domes.map((d) => (
              <button key={d} type="button" aria-label={d} className="h-[20px] border-r border-b border-[#aaa] bg-[#dddbd0]">
                <ToolIcon name={d} />
              </button>
            ))}
          </div>
          <input
            type="range"
            aria-label="Shade amount"
            defaultValue={0}
            className="mt-[5px] block h-px w-full appearance-none bg-[#333] [&::-webkit-slider-thumb]:size-[5px] [&::-webkit-slider-thumb]:rotate-45 [&::-webkit-slider-thumb]:appearance-none [&::-webkit-slider-thumb]:border [&::-webkit-slider-thumb]:border-black [&::-webkit-slider-thumb]:bg-white"
          />
        </div>
      </div>
      <div className="mt-[3px] mr-[2px] h-[31px] shrink-0 border-t border-r border-[#444] pl-[9px]">
        <div className="grid w-[89px] grid-cols-4">{evalTools.map((t) => <ToolButton key={t.label} tool={t} />)}</div>
      </div>
      <div className="flex flex-1 items-center justify-end bg-linear-to-b from-[#b4c2e0] to-[#9fb0d4] pr-[5px]">
        <WindowDots colors="gray" />
      </div>
    </aside>
  );
}

function Shelf() {
  return (
    <footer className="flex h-[47px] bg-[#f8f8f8] text-[7px]">
      <div className="w-[5px] bg-[#50487e] pt-[4px] text-[5px] leading-[5px] text-white">▶</div>
      <div className="min-w-0 flex-1">
        <div className="flex h-[15px] pl-[10px]">
          <button type="button" className="w-[61px] rounded-t-[6px] border-x border-t border-[#222]">PickXform</button>
          {shelfTabs.map((t) => (
            <button key={t} type="button" className="flex min-w-0 flex-1 items-center justify-center overflow-hidden rounded-tr-[4px] border-r border-b border-[#222] whitespace-nowrap">
              {t}
            </button>
          ))}
          <button type="button" className="w-[64px] rounded-tr-[6px] border-t border-r border-b border-[#222]">Viewing</button>
          <span className="w-[15px] border-b border-[#222]" />
        </div>
        <div className="mt-px flex h-[31px] items-end justify-between">
          <div className="ml-[9px] grid h-[31px] w-[468px] grid-cols-[repeat(21,minmax(0,1fr))]">
            {shelfTools.map((t) => <ToolButton key={t.label} tool={t} />)}
          </div>
          <div className="flex h-[11px] w-[59px] items-center justify-around border-t border-l border-[#999] bg-white pl-[3px]">
            <svg viewBox="0 0 50 9" className="h-[9px] w-[50px]" fill="none" aria-hidden="true">
              <path d="M1 3h7v3H1zM4.500 0v9" stroke="#a02050" />
              <path d="M12 2l3 1M15 6h3" stroke="#505090" strokeWidth="2" />
              <path d="M27 1c0 4-1 5-4 6" stroke="#503090" strokeWidth="2" />
              <path d="M32 2h8v5h-8zM33 4.500h6" stroke="#888" />
              <path d="M43 1h6v7h-6zM43 2h6" stroke="#556" />
            </svg>
          </div>
        </div>
      </div>
    </footer>
  );
}

export default function App() {
  return (
    <main className="min-h-screen bg-[#fefefe] font-['Liberation_Sans',Arial,sans-serif] text-[#111]">
      <div className="w-2/3 overflow-hidden">
        <div className="h-[4px] bg-[#5d5394]" />
        <div className="flex">
          <Palette />
          <div className="relative flex min-w-0 flex-1 flex-col border-l-2 border-[#7480a8] bg-[#f8f8f8]">
            <header className="flex h-[14px] items-center justify-between border-b border-[#bbb] bg-linear-to-b from-white to-[#e2e2e4] pr-[4px] pl-[2px]">
              <AppLogo />
              <h1 className="font-['Roboto'] text-[9px] leading-[12px] text-black">Studio w/AE ( Version 11.0.2 None-0 expires Permanent )</h1>
              <WindowDots colors="traffic" />
            </header>
            <div className="flex pl-[2px]">
              <Workspace />
              <ControlPanel />
            </div>
            <Shelf />
            <div role="menu" aria-label="Edit" className="absolute top-[31px] left-[19px] z-20 grid h-[250px] w-[107px] auto-rows-fr border border-[#777] bg-[#f9f9f9]">
              {editMenu.map((item) => <MenuRow key={item.label} item={item} />)}
            </div>
            <div role="menu" aria-label="Duplicate" className="absolute top-[142px] left-[126px] z-20 grid h-[64px] w-[91px] auto-rows-fr border-r-2 border-b-2 border-[#777] bg-[#f9f9f9] pl-[2px]">
              {["Object", "Animation channels", "Overlay skeleton", "Mirror"].map((label) => (
                <MenuRow key={label} item={{ label, end: "box" }} />
              ))}
            </div>
          </div>
        </div>
        <div className="flex h-[3px] border-t border-[#6470a0] bg-[#eef0f6]">
          <span className="ml-[173px] w-[68px] bg-[#4a70b0]" />
        </div>
      </div>
    </main>
  );
}
